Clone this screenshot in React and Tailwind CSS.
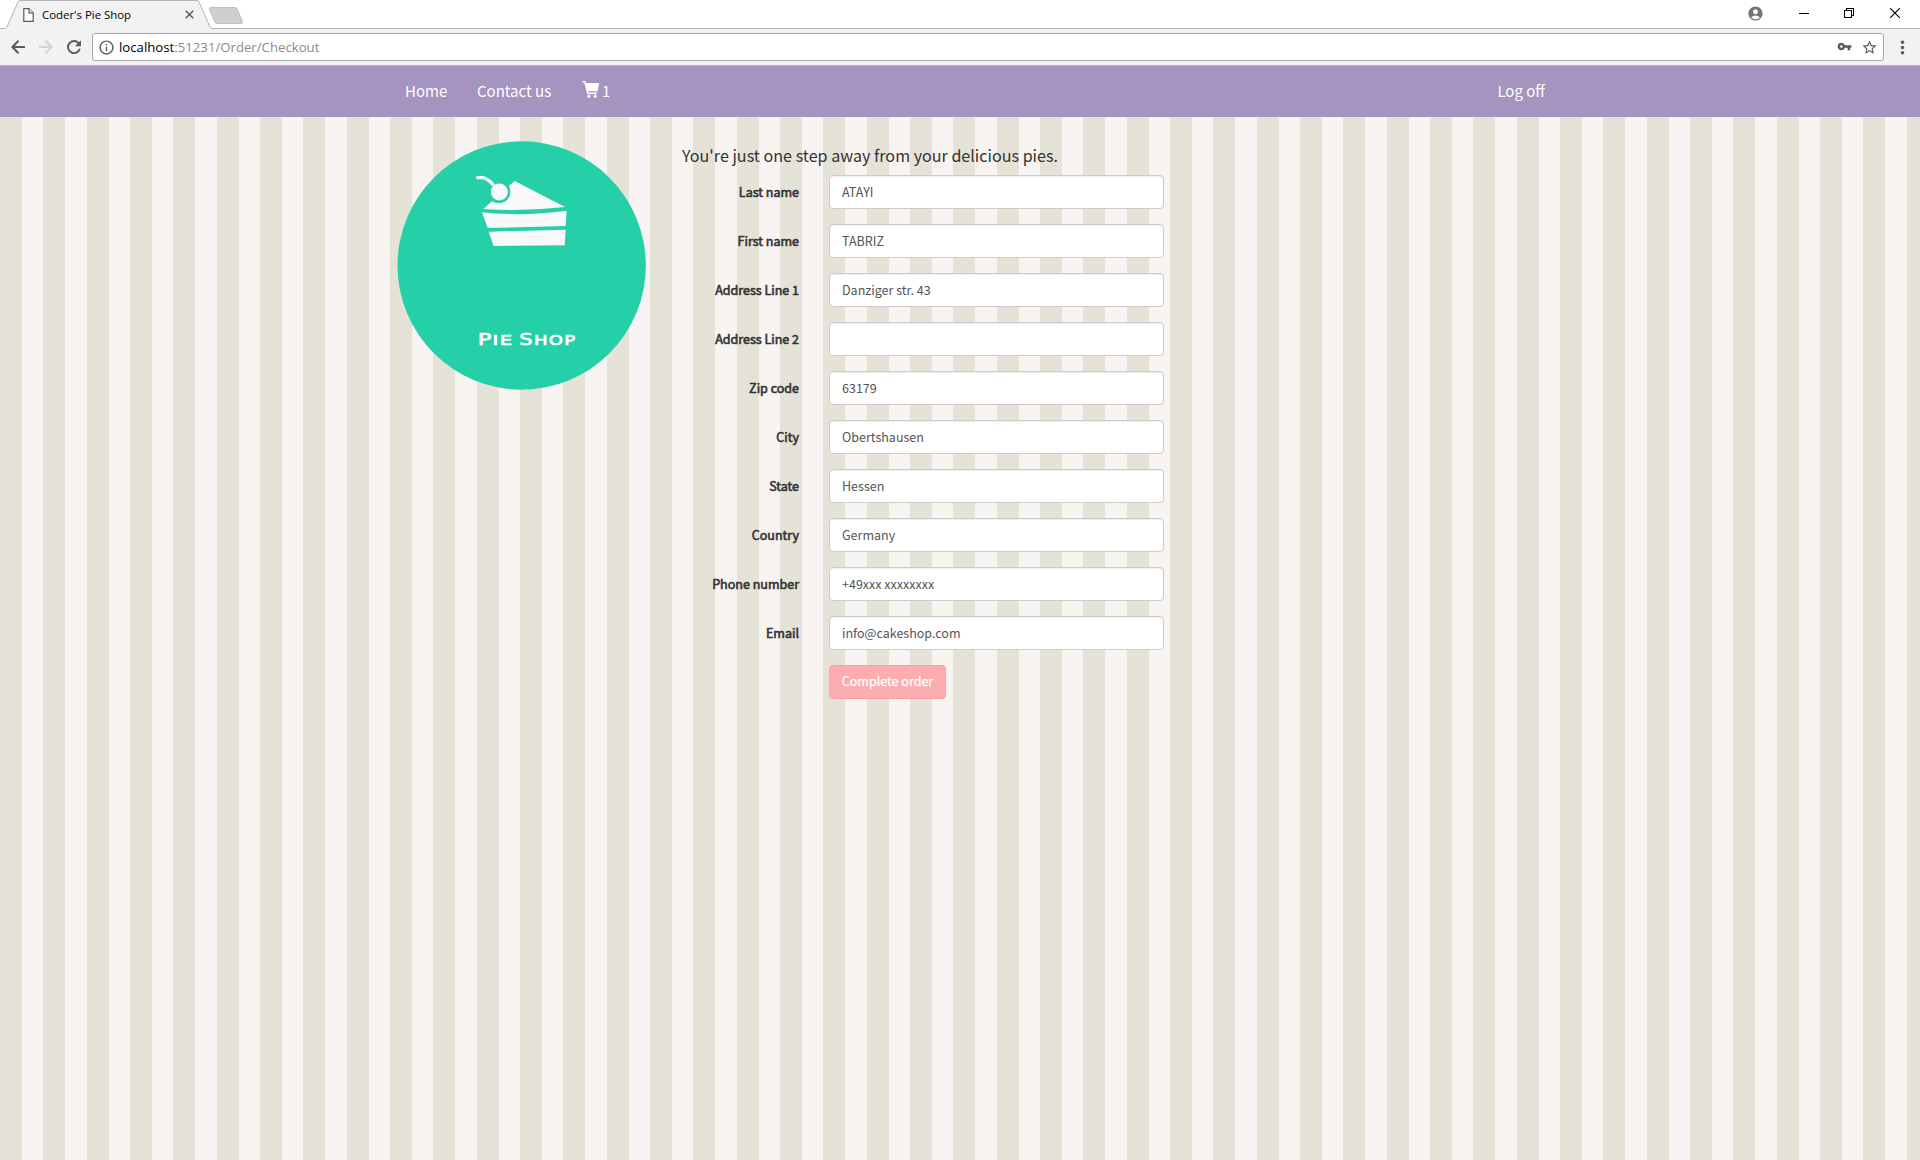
import { MdAccountCircle, MdInfoOutline, MdMoreVert, MdStarBorder, MdVpnKey } from "react-icons/md";

const FIELDS = [
  { label: "Last name", value: "ATAYI" },
  { label: "First name", value: "TABRIZ" },
  { label: "Address Line 1", value: "Danziger str. 43" },
  { label: "Address Line 2", value: "" },
  { label: "Zip code", value: "63179" },
  { label: "City", value: "Obertshausen" },
  { label: "State", value: "Hessen" },
  { label: "Country", value: "Germany" },
  { label: "Phone number", value: "+49xxx xxxxxxxx" },
  { label: "Email", value: "info@cakeshop.com" },
];

function TabStrip() {
  return (
    <div className="flex h-[29px] items-start bg-white">
      <div className="relative h-[29px] w-[213px] shrink-0">
        <svg className="absolute inset-0" width="250" height="29" viewBox="0 0 250 29" fill="none">
          <path d="M0 28.5H5.5Q6.5 28 7 27L18 2Q18.6.5 20 .5H197Q198.400.5 199 2L210 27Q210.500 28.500 212 28.500H250" fill="#f2f2f2" stroke="#b4b4b4" />
          <path d="M210 7.500H235Q236.500 7.500 237 8.700L242.500 21.500Q243 23.500 241.500 23.500H217Q215.500 23.500 215 22.500L209.500 9.500Q209 7.500 210 7.500Z" fill="#cfcfcf" stroke="#c0c0c0" />
        </svg>
        <div className="relative flex h-[29px] items-center pl-[23px]">
          <svg className="h-[14px] w-[11px] shrink-0" viewBox="0 0 11 14" fill="#fff" stroke="#5a5a5a" strokeWidth="1.2">
            <path d="M.8.7H6L10.200 4.900V13.300H.8Z" />
            <path d="M6 .7V4.900H10.200" />
          </svg>
          <span className="ml-[8px] w-[143px] whitespace-nowrap text-[11.4px] leading-[20px] text-black">Coder's Pie Shop</span>
          <svg className="h-[9px] w-[9px]" viewBox="0 0 9 9" stroke="#5a5a5a" strokeWidth="1.500">
            <path d="M.7.7 8.300 8.300M8.300.7.7 8.300" />
          </svg>
        </div>
      </div>
      <div className="flex h-[29px] flex-1 items-center justify-end border-b border-[#b4b4b4]">
        <MdAccountCircle className="mt-[-1px] mr-[35px] size-[17px] text-[#757575]" />
        <svg className="mr-[35px] h-[10px] w-[10px]" viewBox="0 0 10 10" stroke="#000">
          <path d="M0 4.500H10" />
        </svg>
        <svg className="mt-[-2px] mr-[36px] h-[10px] w-[10px]" viewBox="0 0 10 10" fill="none" stroke="#000" shapeRendering="crispEdges">
          <path d="M.5 2.500H7.500V9.500H.5Z" />
          <path d="M2.500 2.500V.5H9.500V7.500H7.500" />
        </svg>
        <svg className="mt-[-2px] mr-[20px] h-[10px] w-[10px]" viewBox="0 0 10 10" stroke="#000" strokeWidth="1.100">
          <path d="M0 0 10 10M10 0 0 10" />
        </svg>
      </div>
    </div>
  );
}

function Toolbar() {
  return (
    <div className="flex h-[37px] items-start border-b border-[#b6b4b6] bg-[#f2f2f2] pt-1">
      <svg className="mt-[7px] ml-[11px] size-[14px]" viewBox="0 0 14 14" fill="none" stroke="#5a5a5a" strokeWidth="2">
        <path d="M14 7H1.500M7.500.8 1.400 7 7.500 13.200" />
      </svg>
      <svg className="mt-[7px] ml-[14px] size-[14px]" viewBox="0 0 14 14" fill="none" stroke="#d3d3d3" strokeWidth="2">
        <path d="M0 7H12.500M6.500.8 12.600 7 6.500 13.200" />
      </svg>
      <svg className="mt-[7px] ml-[14px] size-[14px]" viewBox="0 0 14 14" fill="none">
        <path d="M11.600 3.200A6 6 0 1 0 12.800 8.800" stroke="#5a5a5a" strokeWidth="2" />
        <path d="M14 .2V6.200H8Z" fill="#5a5a5a" />
      </svg>
      <div className="ml-[11px] flex h-[28px] w-[1792px] items-center rounded-[3px] border border-[#a9a9a9] bg-white">
        <MdInfoOutline className="ml-[5px] size-[17px] text-[#5a5a5a]" />
        <span className="ml-[4px] text-[13.2px] leading-[20px] text-[#8a8a8a]">
          <span className="text-black">localhost</span>:51231/Order/Checkout
        </span>
        <MdVpnKey className="mt-[-2px] mr-[9px] ml-auto size-[15px] text-[#5a5a5a]" />
        <MdStarBorder className="mr-[5px] size-[17px] text-[#5a5a5a]" />
      </div>
      <MdMoreVert className="mt-[4px] ml-[8px] size-[21px] text-[#5a5a5a]" />
    </div>
  );
}

function CartIcon() {
  return (
    <svg className="h-[17px] w-[18px]" viewBox="0 0 18 17" fill="#fff">
      <path d="M.5 0H3.200L4 2H17.200L15.600 10.200H6L6.400 11.600H14.800V13.200H5.200L2.300 1.500H.5Z" />
      <circle cx="6.900" cy="15.200" r="1.500" />
      <circle cx="13.200" cy="15.200" r="1.500" />
    </svg>
  );
}

function NavBar() {
  return (
    <nav className="h-[51px] bg-[#a593c0] text-[15px] leading-[24px] text-white">
      <div className="mx-auto flex h-[49px] w-[1140px] items-center pl-[15px]">
        <a className="w-[72px]">Home</a>
        <a className="w-[105px]">Contact us</a>
        <a className="flex items-center gap-[2px]">
          <span className="mt-[-3px]">
            <CartIcon />
          </span>
          <span>1</span>
        </a>
        <a className="mr-[-15px] ml-auto">Log off</a>
      </div>
    </nav>
  );
}

function Logo() {
  return (
    <svg className="h-[250px] w-[250px]" viewBox="51 63 750 750">
      <circle cx="425" cy="436.500" r="372.500" fill="#25d0a9" />
      <g fill="#f9f9f9">
        <path d="M404 183 555 261Q430 275 310 267L336 244A37 37 0 0 0 387 197Z" />
        <path d="M306 277Q430 290 560 272L557 318 323 324Z" />
        <path d="M326 335 557 329 554 376 341 378Z" />
      </g>
      <circle cx="358" cy="216" r="33" fill="#25d0a9" />
      <circle cx="358" cy="216" r="25.500" fill="#f9f9f9" />
      <path d="M289 174Q316 165 341 196" fill="none" stroke="#f9f9f9" strokeWidth="10" />
      <g fill="#fff" stroke="#fff" strokeWidth="2" letterSpacing="3" className="font-['DejaVu_Sans','Liberation_Sans',sans-serif]">
        <text x="293" y="674" fontSize="50" textLength="107" lengthAdjust="spacingAndGlyphs">
          P<tspan fontSize="43">IE</tspan>
        </text>
        <text x="418" y="674" fontSize="50" textLength="171" lengthAdjust="spacingAndGlyphs">
          S<tspan fontSize="43">HOP</tspan>
        </text>
      </g>
    </svg>
  );
}

function Field({ label, value }) {
  return (
    <div className="flex h-[34px] items-center">
      <label className="mt-[-1px] w-[117px] text-right text-[12.53px] leading-5 text-[#333] [-webkit-text-stroke:0.6px_#333]">{label}</label>
      <input
        type="text"
        defaultValue={value}
        className="ml-[30px] h-[34px] w-[335px] rounded-[4px] border border-[#ccc] bg-white px-3 pb-[2px] text-[12.53px] text-[#555] shadow-[inset_0_1px_1px_rgba(0,0,0,0.075)]"
      />
    </div>
  );
}

export default function App() {
  return (
    <div className="flex h-[1160px] w-[1920px] flex-col overflow-hidden bg-[#f7f4f2] font-['Noto_Sans_CJK_SC','Liberation_Sans',sans-serif]">
      <header className="shrink-0 font-['Open_Sans','Noto_Sans',sans-serif]">
        <TabStrip />
        <Toolbar />
      </header>
      <NavBar />
      <main className="flex-1 bg-[repeating-linear-gradient(90deg,#e5e3d8_0_22px,#f7f4f2_22px_43px,#e5e3d8_43px_65px,#f7f4f2_65px_87px,#e5e3d8_87px_109px,#f7f4f2_109px_130px)]">
        <div className="flex items-start pl-[397px]">
          <div className="mt-6">
            <Logo />
          </div>
          <form className="mt-[26px] ml-[35px]">
            <p className="h-[32px] text-[16.12px] leading-[25px] text-[#333]">You're just one step away from your delicious pies.</p>
            <div className="flex flex-col gap-[15px]">
              {FIELDS.map((field) => (
                <Field key={field.label} label={field.label} value={field.value} />
              ))}
              <button
                type="button"
                className="ml-[147px] h-[34px] w-[117px] rounded-[4px] border border-[#fba0a2] bg-[#fdadaf] pb-[1px] text-[12.53px] text-white [-webkit-text-stroke:0.25px_#fff]"
              >
                Complete order
              </button>
            </div>
          </form>
        </div>
      </main>
    </div>
  );
}
